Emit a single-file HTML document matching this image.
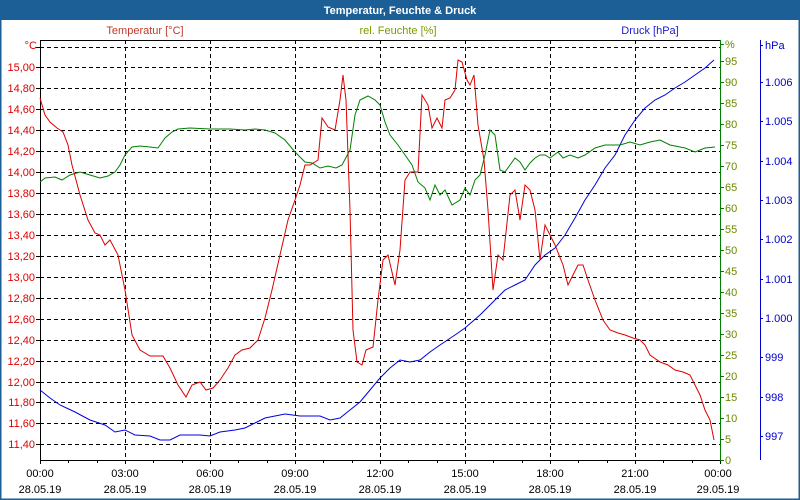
<!DOCTYPE html><html><head><style>body{margin:0;width:800px;height:500px;overflow:hidden;background:#fff}
svg{display:block;font-family:"Liberation Sans",sans-serif;font-size:11px}</style></head><body>
<svg width="800" height="500" xmlns="http://www.w3.org/2000/svg">
<rect x="0" y="0" width="800" height="500" fill="#fff"/>
<rect x="0.5" y="0.5" width="799" height="499" fill="none" stroke="#1c5f96" stroke-width="2"/>
<rect x="0" y="0" width="800" height="20" fill="#1c5f96"/>
<text x="400" y="14" text-anchor="middle" fill="#fff" font-weight="bold">Temperatur, Feuchte &amp; Druck</text>
<text x="145" y="34" text-anchor="middle" fill="#c0392b">Temperatur [°C]</text>
<text x="398" y="34" text-anchor="middle" fill="#7a9a00">rel. Feuchte [%]</text>
<text x="650" y="34" text-anchor="middle" fill="#1a1acc">Druck [hPa]</text>
<g stroke="#000" stroke-dasharray="4,3" stroke-width="1">
<path d="M40 47.5H720M40 67.5H720M40 88.5H720M40 109.5H720M40 130.5H720M40 151.5H720M40 172.5H720M40 193.5H720M40 214.5H720M40 235.5H720M40 256.5H720M40 277.5H720M40 298.5H720M40 319.5H720M40 340.5H720M40 361.5H720M40 382.5H720M40 402.5H720M40 423.5H720M40 444.5H720"/>
<path d="M125.5 40V460M210.5 40V460M295.5 40V460M380.5 40V460M465.5 40V460M550.5 40V460M635.5 40V460"/>
</g>
<path d="M40 40.5H720" stroke="#000"/>
<path d="M40.5 40V460.5H720" stroke="#000" fill="none"/>
<g stroke="#000"><path d="M40.5 460v4M68.5 460v3M97.5 460v3M125.5 460v4M153.5 460v3M182.5 460v3M210.5 460v4M238.5 460v3M267.5 460v3M295.5 460v4M323.5 460v3M352.5 460v3M380.5 460v4M408.5 460v3M437.5 460v3M465.5 460v4M493.5 460v3M522.5 460v3M550.5 460v4M578.5 460v3M607.5 460v3M635.5 460v4M663.5 460v3M692.5 460v3M720.5 460v4"/>
<path d="M36 47.5h4M36 67.5h4M36 88.5h4M36 109.5h4M36 130.5h4M36 151.5h4M36 172.5h4M36 193.5h4M36 214.5h4M36 235.5h4M36 256.5h4M36 277.5h4M36 298.5h4M36 319.5h4M36 340.5h4M36 361.5h4M36 382.5h4M36 402.5h4M36 423.5h4M36 444.5h4"/></g>
<path d="M720.5 40V461" stroke="#008000"/>
<g stroke="#008000"><path d="M720 44.5h4M720 61.5h4M720 82.5h4M720 103.5h4M720 124.5h4M720 145.5h4M720 166.5h4M720 187.5h4M720 208.5h4M720 229.5h4M720 250.5h4M720 271.5h4M720 292.5h4M720 313.5h4M720 334.5h4M720 355.5h4M720 376.5h4M720 397.5h4M720 418.5h4M720 439.5h4M720 460.5h4"/></g>
<path d="M760.5 40V460" stroke="#0000cc"/>
<g stroke="#0000cc"><path d="M760 45.5h3M760 82.5h3M760 121.5h3M760 161.5h3M760 200.5h3M760 239.5h3M760 279.5h3M760 318.5h3M760 357.5h3M760 397.5h3M760 436.5h3"/></g>
<g fill="#e00000" text-anchor="end">
<text x="37" y="49">°C</text><text x="35" y="71">15,00</text><text x="35" y="92">14,80</text><text x="35" y="113">14,60</text><text x="35" y="134">14,40</text><text x="35" y="155">14,20</text><text x="35" y="176">14,00</text><text x="35" y="197">13,80</text><text x="35" y="218">13,60</text><text x="35" y="239">13,40</text><text x="35" y="260">13,20</text><text x="35" y="281">13,00</text><text x="35" y="302">12,80</text><text x="35" y="323">12,60</text><text x="35" y="344">12,40</text><text x="35" y="365">12,20</text><text x="35" y="386">12,00</text><text x="35" y="406">11,80</text><text x="35" y="427">11,60</text><text x="35" y="448">11,40</text>
</g>
<g fill="#6a8a00">
<text x="725" y="48">%</text><text x="725" y="65">95</text><text x="725" y="86">90</text><text x="725" y="107">85</text><text x="725" y="128">80</text><text x="725" y="149">75</text><text x="725" y="170">70</text><text x="725" y="191">65</text><text x="725" y="212">60</text><text x="725" y="233">55</text><text x="725" y="254">50</text><text x="725" y="275">45</text><text x="725" y="296">40</text><text x="725" y="317">35</text><text x="725" y="338">30</text><text x="725" y="359">25</text><text x="725" y="380">20</text><text x="725" y="401">15</text><text x="725" y="422">10</text><text x="725" y="443">5</text><text x="725" y="464">0</text>
</g>
<g fill="#0000cc">
<text x="765" y="49">hPa</text><text x="765" y="86">1.006</text><text x="765" y="125">1.005</text><text x="765" y="165">1.004</text><text x="765" y="204">1.003</text><text x="765" y="243">1.002</text><text x="765" y="283">1.001</text><text x="765" y="322">1.000</text><text x="765" y="361">999</text><text x="765" y="401">998</text><text x="765" y="440">997</text>
</g>
<g fill="#000" text-anchor="middle">
<text x="40" y="477">00:00</text><text x="125" y="477">03:00</text><text x="210" y="477">06:00</text><text x="295" y="477">09:00</text><text x="380" y="477">12:00</text><text x="465" y="477">15:00</text><text x="550" y="477">18:00</text><text x="635" y="477">21:00</text><text x="718" y="477">00:00</text>
<text x="40" y="493">28.05.19</text><text x="125" y="493">28.05.19</text><text x="210" y="493">28.05.19</text><text x="295" y="493">28.05.19</text><text x="380" y="493">28.05.19</text><text x="465" y="493">28.05.19</text><text x="550" y="493">28.05.19</text><text x="635" y="493">28.05.19</text><text x="718" y="493">29.05.19</text>
</g>
<g fill="none" stroke-width="1">
<polyline stroke="#0000dd" points="40,390 50,398 60,405 75,412 90,420 105,425 115,432 125,430 135,435 150,436 160,440 170,440 180,435 190,435 200,435 210,436 220,432 235,430 245,428 255,423 265,418 275,416 285,414 300,416 320,416 330,420 340,418 350,410 360,402 370,390 380,378 390,368 400,360 410,362 420,360 430,352 440,345 455,335 465,328 480,315 495,300 505,290 515,285 525,280 535,265 545,255 555,248 565,235 575,218 585,200 595,185 605,168 615,155 625,135 635,120 645,108 655,100 665,95 675,88 685,82 695,75 705,68 714,60"/>
<polyline stroke="#008000" points="40,182 45,178 55,177 62,180 70,175 80,172 90,175 100,178 108,176 115,172 120,165 125,155 132,147 140,146 150,147 158,148 165,138 172,132 178,129 190,128 210,129 230,129 245,130 255,129 265,130 275,133 285,140 295,152 305,162 312,163 320,168 328,166 336,168 342,165 350,150 355,115 360,100 368,96 375,100 380,105 385,122 390,135 398,145 405,155 412,165 418,182 425,188 430,200 435,185 440,195 445,190 452,205 460,200 465,188 470,195 475,180 480,175 485,155 490,130 495,135 500,170 505,172 510,165 515,158 520,162 525,170 530,163 535,158 540,155 545,155 550,158 558,152 563,158 570,155 578,158 585,155 595,148 605,145 620,145 630,142 640,145 650,142 660,140 670,145 685,148 695,152 705,148 715,147"/>
<polyline stroke="#dd0000" points="40,98 45,115 50,122 57,128 63,132 68,145 72,165 80,195 88,220 95,233 100,235 105,245 110,240 118,255 125,290 132,335 140,350 150,356 163,356 170,368 178,385 186,397 192,385 200,382 206,390 213,388 220,380 228,368 235,355 242,350 250,348 258,340 265,318 272,290 280,255 288,220 295,200 300,185 305,165 310,165 318,160 322,118 328,127 335,130 340,100 343,75 346,100 350,210 353,330 357,362 362,365 366,350 373,347 378,300 383,260 388,255 395,285 400,250 405,180 410,172 418,172 422,95 428,105 432,128 437,118 442,128 445,100 450,98 455,90 458,60 462,62 467,80 470,85 474,75 478,125 484,160 488,210 493,290 498,255 503,260 510,195 515,190 520,220 525,185 530,190 535,210 540,260 545,225 550,235 555,245 563,265 568,285 573,275 578,265 583,265 588,280 595,300 603,320 610,330 618,333 625,335 633,338 640,340 645,345 650,355 660,362 668,365 675,370 683,372 690,375 695,385 700,395 705,410 710,420 714,440"/>
</g>
</svg></body></html>
